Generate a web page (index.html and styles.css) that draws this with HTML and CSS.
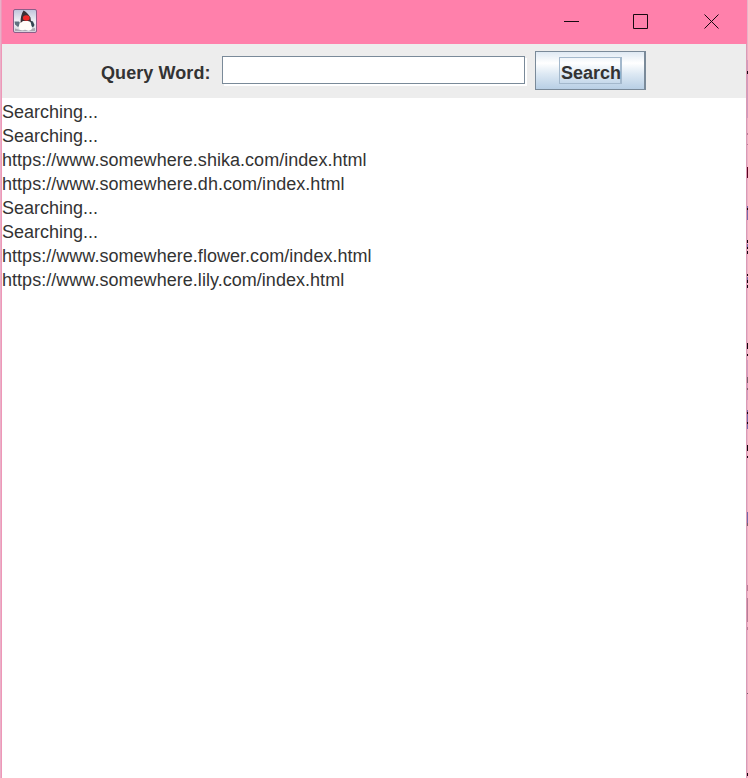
FILE: index.html
```html
<!DOCTYPE html>
<html lang="en">
<head>
<meta charset="utf-8">
<title>Query</title>
<link rel="stylesheet" href="styles.css">
</head>
<body>
<div class="desktop">
  <main class="window">
    <header class="titlebar">
      <svg class="app-icon" width="24" height="24" viewBox="0 0 24 24">
        <defs>
          <linearGradient id="tile" x1="0" y1="0" x2="0" y2="1">
            <stop offset="0" stop-color="#bfc3da"/><stop offset=".55" stop-color="#f4f4f8"/><stop offset="1" stop-color="#d3d0da"/>
          </linearGradient>
        </defs>
        <rect x=".5" y=".5" width="23" height="23" rx="1.5" fill="url(#tile)" stroke="#8d5d88"/>
        <path d="M1.500 12.500 6 12.500 8 15 5 18 2 15.500Z" fill="#607180"/>
        <path d="M17 11.500 20 12.500 21.500 16 20 18.500 17 16Z" fill="#344653"/>
        <path d="M2 19.500Q8 22 12 21T22 19V22H2Z" fill="#aaa8b1"/>
        <path d="M8 11Q5 16 6.500 20.500Q9 22 12 20.500Q16 23 19 20Q18.500 15 16.500 10Z" fill="#fffdf9"/>
        <path d="M10.500 1.500Q14 3 17.500 8.500L18 13 15 12H10L7.500 14Q7.500 6 10.500 1.500Z" fill="#3a3036"/>
        <ellipse cx="13.300" cy="9" rx="3.400" ry="2.800" fill="#f02828"/>
      </svg>
      <div class="controls">
        <svg width="16" height="16" viewBox="0 0 16 16"><path d="M0 7.500H15"/></svg>
        <svg width="16" height="16" viewBox="0 0 16 16"><path d="M.5.5H14.500V14.500H.5Z"/></svg>
        <svg width="16" height="16" viewBox="0 0 16 16"><path d="M.5.5 14.500 14.500M14.500.5.5 14.500"/></svg>
      </div>
    </header>
    <form class="query">
      <label for="word">Query Word:</label>
      <input id="word" type="text">
      <button type="button"><span>Search</span></button>
    </form>
    <section class="results">
      <p>Searching...</p>
      <p>Searching...</p>
      <p class="link">https://www.somewhere.shika.com/index.html</p>
      <p class="link">https://www.somewhere.dh.com/index.html</p>
      <p>Searching...</p>
      <p>Searching...</p>
      <p class="link">https://www.somewhere.flower.com/index.html</p>
      <p class="link">https://www.somewhere.lily.com/index.html</p>
    </section>
  </main>
  <svg class="edge" width="2" height="778" viewBox="0 0 2 778">
    <path fill="#ff80ab" d="M0 0H1V44H0Z"/>
    <path fill="#de98b4" d="M0 44H1V778H0Z"/>
    <path fill="#e8b3c8" d="M1 0H2V778H1Z"/>
    <path fill="#cf9cbd" d="M1 60H2V118H1ZM1 360H2V400H1Z"/>
    <path fill="#160711" d="M1 71H2V74H1ZM1 240H2V243H1ZM1 247H2V249H1ZM1 251H2V254H1ZM1 274H2V276H1ZM1 280H2V283H1ZM1 285H2V288H1ZM1 343H2V349H1ZM1 354H2V356H1ZM1 445H2V451H1ZM1 456H2V458H1ZM1 773H2V776H1Z"/>
    <path fill="#590521" d="M1 167H2V178H1Z"/>
    <path fill="#7568a9" d="M1 206H2V220H1ZM1 244H2V247H1ZM1 277H2V280H1ZM1 410H2V429H1ZM1 512H2V524H1Z"/>
    <path fill="#160711" d="M1 208H2V210H1ZM1 412H2V414H1ZM1 422H2V424H1Z"/>
    <path fill="#79606f" d="M1 377H2V383H1ZM1 388H2V390H1ZM1 523H2V526H1ZM1 693H2V694H1Z"/>
    <path fill="#b67f98" d="M1 133H2V135H1ZM1 144H2V145H1ZM1 585H2V591H1ZM1 598H2V622H1ZM1 627H2V630H1Z"/>
  </svg>
</div>
</body>
</html>
```
FILE: styles.css
```css
* { box-sizing: border-box; }
body {
  margin: 0;
  overflow: hidden;
  color: #333;
  font: 18px/24px "Liberation Sans", Arial, sans-serif;
}
.desktop {
  display: grid;
  grid-template-columns: 2px 744px 2px;
  height: 778px;
  background: linear-gradient(90deg, #e9b0c8 1px, #ee98b8 1px, #ee98b8 2px, #fff 2px);
}
.window {
  grid-column: 2;
  display: grid;
  grid-template-rows: 44px 54px 1fr;
  background: #fff;
}
.edge { display: block; }
.titlebar {
  display: flex;
  justify-content: space-between;
  align-items: flex-start;
  padding: 9px 26px 0 11px;
  background: #ff80ab;
}
.app-icon { display: block; }
.controls {
  display: flex;
  gap: 55px;
  padding-top: 5px;
}
.controls svg {
  display: block;
  fill: none;
  stroke: #160a10;
  stroke-width: 1;
}
.controls svg:first-child { margin-right: -2px; }
.query {
  display: flex;
  align-items: flex-start;
  padding: 7px 0 0 99px;
  background: #ededed;
}
.query label {
  width: 121px;
  padding-top: 10px;
  font-weight: bold;
  letter-spacing: .08px;
}
.query input {
  width: 303px;
  height: 28px;
  margin: 5px 10px 0 0;
  padding: 2px;
  border: 1px solid #7a8a99;
  border-radius: 0;
  outline: 0;
  background: #fff;
  box-shadow: 2px 2px #fff;
  font: inherit;
}
.query button {
  display: flex;
  width: 111px;
  height: 39px;
  padding: 5px 0 0 23px;
  border: 1px solid #7a8a99;
  border-right-width: 2px;
  background: linear-gradient(#dfe9f3, #fff 30%, #dce8f3 60%, #b8cfe5);
  color: #333;
  font: bold 18px/30px "Liberation Sans", Arial, sans-serif;
}
.query button span {
  width: 63px;
  height: 27px;
  padding-left: 1px;
  border: 1px solid #a3b8cc;
  border-right-width: 2px;
}
.results { padding-top: 2px; }
.results p { margin: 0; }
.results .link { letter-spacing: .035px; }
```
